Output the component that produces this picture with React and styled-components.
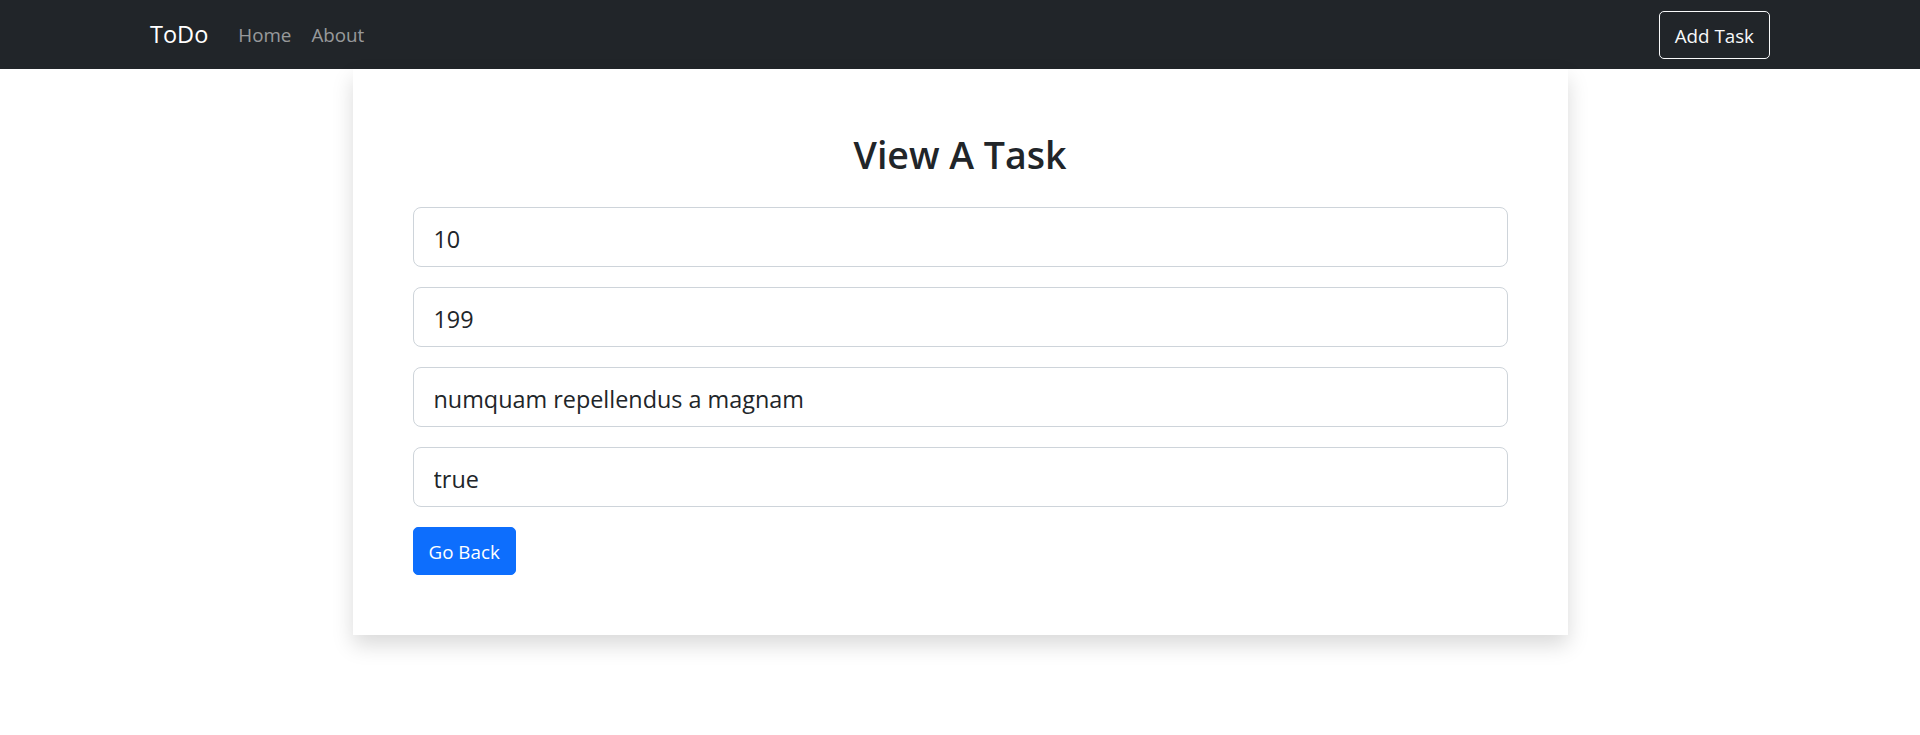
import React from "react";
import styled, { createGlobalStyle } from "styled-components";

const GlobalStyle = createGlobalStyle`
  * {
    box-sizing: border-box;
  }
  body {
    margin: 0;
    background: #fff;
    font-family: "Open Sans", "Noto Sans", sans-serif;
    color: #212529;
  }
`;

const Navbar = styled.nav`
  background-color: #212529;
  height: 69px;
  display: flex;
  align-items: center;
`;

const Container = styled.div`
  width: 100%;
  max-width: 1650px;
  margin: 0 auto;
  padding: 0 15px;
`;

const NavInner = styled(Container)`
  display: flex;
  align-items: center;
  justify-content: space-between;
`;

const Main = styled(Container)`
  padding-bottom: 80px;
`;

const NavLeft = styled.div`
  display: flex;
  align-items: center;
`;

const Brand = styled.a`
  font-size: 23.5px;
  line-height: 37px;
  color: #fff;
  text-decoration: none;
  margin-right: 20px;
`;

const NavLink = styled.a`
  font-size: 18.8px;
  line-height: 30px;
  color: rgba(255, 255, 255, 0.55);
  text-decoration: none;
  padding: 0 10px;
`;

const Button = styled.button`
  font-family: inherit;
  font-size: 18.8px;
  line-height: 30px;
  height: 48px;
  padding: 2px 15px 0;
  border-radius: 5px;
  cursor: pointer;
  border: 1px solid ${(p) => (p.$outline ? "#f8f9fa" : "#0d6efd")};
  background: ${(p) => (p.$outline ? "transparent" : "#0d6efd")};
  color: ${(p) => (p.$outline ? "#f8f9fa" : "#fff")};
`;

const Card = styled.div`
  width: 75%;
  margin: 0 auto;
  padding: 60px;
  background: #fff;
  box-shadow: 0 10px 20px rgba(0, 0, 0, 0.15);
`;

const Title = styled.h2`
  font-size: 37.5px;
  font-weight: 600;
  line-height: 48px;
  text-align: center;
  margin: 0 0 28px;
  padding-top: 2px;
  color: #212529;
`;

const Field = styled.input`
  display: block;
  width: 100%;
  height: 60px;
  padding: 3px 20px 0;
  margin-bottom: 20px;
  font-family: inherit;
  font-size: 23.4px;
  color: #212529;
  background: #fff;
  border: 1px solid #ced4da;
  border-radius: 8px;
  outline: none;
`;

const task = { id: 10, userId: 199, title: "numquam repellendus a magnam", completed: true };

export default function App() {
  return (
    <>
      <GlobalStyle />
      <Navbar>
        <NavInner>
          <NavLeft>
            <Brand href="#">ToDo</Brand>
            <NavLink href="#">Home</NavLink>
            <NavLink href="#">About</NavLink>
          </NavLeft>
          <Button $outline>Add Task</Button>
        </NavInner>
      </Navbar>
      <Main>
        <Card>
          <Title>View A Task</Title>
          <Field readOnly value={task.id} />
          <Field readOnly value={task.userId} />
          <Field readOnly value={task.title} />
          <Field readOnly value={String(task.completed)} />
          <Button>Go Back</Button>
        </Card>
      </Main>
    </>
  );
}
